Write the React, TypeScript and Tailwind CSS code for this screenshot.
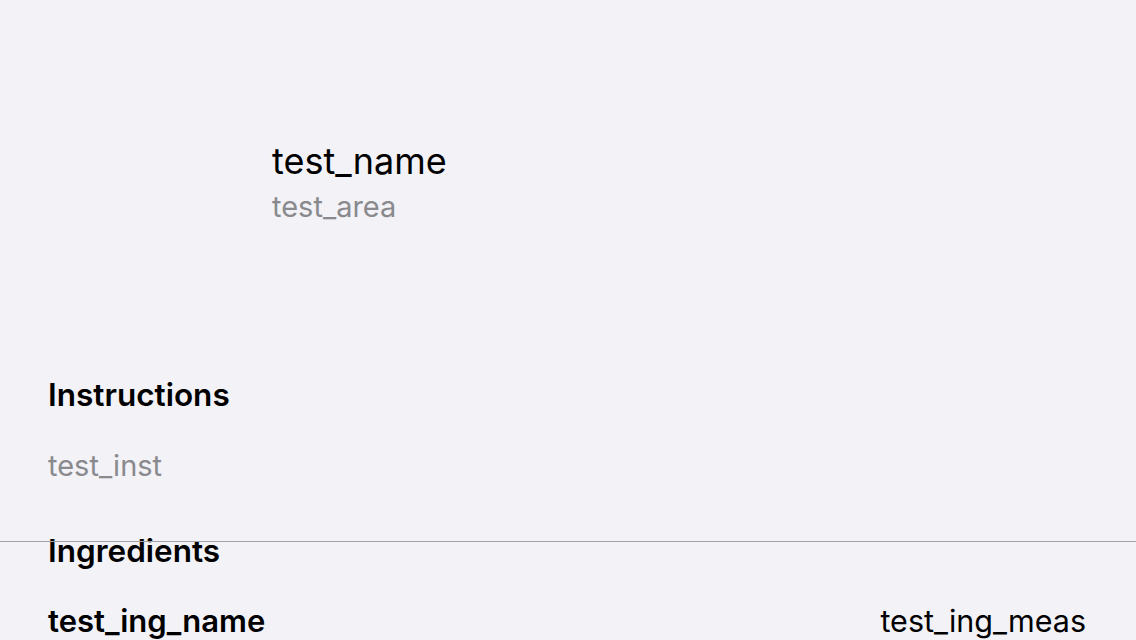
import React from "react";

export default function App() {
  return (
    <div
      className="w-[1136px] h-[640px] overflow-hidden bg-[#f2f2f7] text-black"
      style={{ fontFamily: "Inter, 'Noto Sans', sans-serif" }}
    >
      {/* header */}
      <div className="flex items-center h-[370px] pl-[48px] pb-[6px]">
        <div className="w-[192px] h-[192px]" />
        <div className="ml-[32px] flex flex-col">
          <span className="text-[36px] leading-[40px]">test_name</span>
          <span className="text-[29px] leading-[34px] mt-[9px] text-[#8a8a8e]">test_area</span>
        </div>
      </div>

      <div className="px-[48px] mt-[5px]">
        <h2 className="text-[31.5px] leading-[40px] font-semibold">Instructions</h2>
        <p className="mt-[34px] text-[29px] leading-[34px] text-[#8a8a8e]">test_inst</p>
      </div>

      <div className="relative mt-[48px]">
        <div className="absolute left-0 right-0 top-[10px] h-px bg-[#a3a3a6]" />
        <div className="pl-[48px] pr-[50px]">
          <h2 className="text-[31.5px] leading-[40px] font-semibold">Ingredients</h2>
          <div className="mt-[30px] flex justify-between">
            <span className="text-[31px] leading-[40px] font-semibold">test_ing_name</span>
            <span className="text-[30.5px] leading-[40px]">test_ing_meas</span>
          </div>
        </div>
      </div>
    </div>
  );
}
